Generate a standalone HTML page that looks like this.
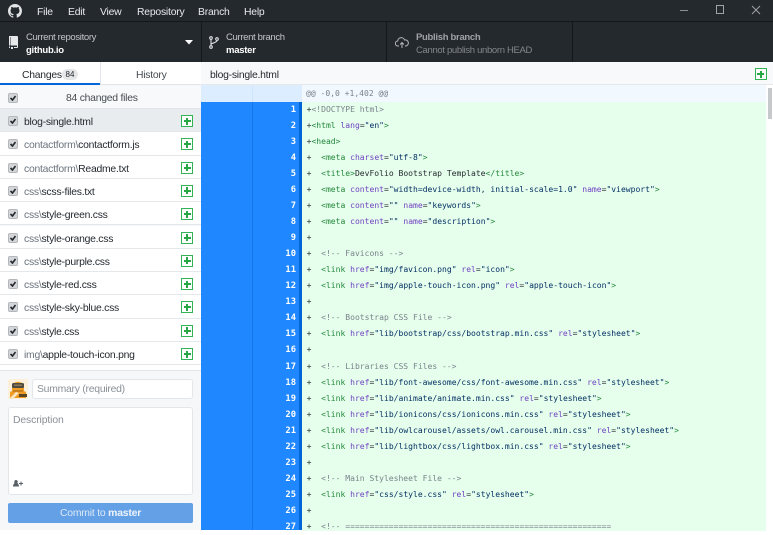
<!DOCTYPE html>
<html><head><meta charset="utf-8">
<style>
*{box-sizing:border-box}
html,body{margin:0;padding:0;width:773px;height:530px;overflow:hidden;background:#fff;font-family:"Liberation Sans",sans-serif;font-size:10.5px;color:#24292e}
.a{position:absolute;white-space:nowrap}
.menu{top:5px;color:#e8eaec;font-size:10.4px;line-height:14px;letter-spacing:-.22px;margin-top:1px}
.tb{background:#24292e;border-right:1px solid #14171a;top:22px;height:40px}
.t1{color:#c3c6c9;font-size:9.5px;line-height:12px;letter-spacing:-.33px;margin-top:2px}
.t2{color:#fff;font-size:9.5px;line-height:12px;font-weight:bold;letter-spacing:-.25px;margin-top:2px}
.ui{font-size:10.4px;line-height:13px;letter-spacing:-.25px}
.row{left:0;width:201px;height:23.3px;background:#fff;border-bottom:1px solid #e5e8eb}
.cb{position:absolute;left:8px;width:10px;height:10px;background:#d4d6d9;border:1px solid #b4b7ba;border-radius:2px}
.cb svg{position:absolute;left:0;top:0}
.plus{position:absolute;left:181px;width:12px;height:12px;border:1px solid #34b356;background:#fff}
.plus:before{content:"";position:absolute;left:4px;top:1.5px;width:2px;height:7px;background:#28a745}
.plus:after{content:"";position:absolute;left:1.5px;top:4px;width:7px;height:2px;background:#28a745}
.fn{position:absolute;left:24px;top:7px;line-height:13px;color:#24292e;font-size:10.4px;letter-spacing:-.25px}
.fn i{font-style:normal;color:#6a737d}
#code{position:absolute;left:302px;top:101.9px;width:464px;height:429px;background:#e6ffed;overflow:hidden}
.l{position:absolute;left:4.6px;height:16px;line-height:16px;font-family:"DejaVu Sans Mono",monospace;font-size:8.04px;white-space:pre;color:#24292e}
.n{position:absolute;left:252px;width:44px;text-align:right;color:#fff;font-family:"DejaVu Sans Mono",monospace;font-size:8.8px;font-weight:bold;line-height:16px;margin-top:.4px}
.g{color:#22863a}.p{color:#6f42c1}.s{color:#032f62}.c{color:#7a828a}
</style></head><body>

<!-- title bar -->
<div class="a" style="left:0;top:0;width:773px;height:22px;background:#24292e;border-bottom:1px solid #14171a"></div>
<svg class="a" style="left:8px;top:4px" width="14" height="14" viewBox="0 0 16 16"><path fill="#e2e4e6" d="M8 0C3.58 0 0 3.58 0 8c0 3.54 2.29 6.53 5.47 7.59.4.07.55-.17.55-.38v-1.34c-2.22.48-2.69-1.07-2.69-1.07-.36-.92-.89-1.17-.89-1.17-.73-.5.05-.49.05-.49.8.06 1.23.82 1.23.82.71 1.22 1.87.87 2.33.66.07-.52.28-.87.5-1.07-1.78-.2-3.64-.89-3.64-3.95 0-.87.31-1.59.82-2.15-.08-.2-.36-1.02.08-2.12 0 0 .67-.21 2.2.82a7.7 7.7 0 0 1 4 0c1.53-1.04 2.2-.82 2.2-.82.44 1.1.16 1.92.08 2.12.51.56.82 1.27.82 2.15 0 3.07-1.87 3.75-3.65 3.95.29.25.54.73.54 1.48v2.2c0 .21.15.46.55.38A8 8 0 0 0 16 8c0-4.42-3.58-8-8-8z"/></svg>
<div class="a menu" style="left:37px">File</div>
<div class="a menu" style="left:68px">Edit</div>
<div class="a menu" style="left:100px">View</div>
<div class="a menu" style="left:137px">Repository</div>
<div class="a menu" style="left:198px">Branch</div>
<div class="a menu" style="left:244px">Help</div>
<div class="a" style="left:680px;top:10px;width:8px;height:1px;background:#8b8f93"></div>
<div class="a" style="left:716px;top:5px;width:8px;height:9px;border:1px solid #a0a3a6"></div>
<svg class="a" style="left:751px;top:5px" width="10" height="10"><path d="M1 1l8 8M9 1l-8 8" stroke="#a0a3a6" fill="none"/></svg>

<!-- toolbar -->
<div class="a tb" style="left:0;width:202px"></div>
<div class="a tb" style="left:202px;width:185px"></div>
<div class="a tb" style="left:387px;width:186px"></div>
<div class="a" style="left:573px;top:22px;width:200px;height:40px;background:#24292e"></div>
<svg class="a" style="left:8px;top:36px" width="10" height="13" viewBox="0 0 10 13"><path fill="#e6e8ea" d="M1 0h8a1 1 0 0 1 1 1v10a1 1 0 0 1-1 1H6v-1h3V9.500H2.500V1H1zM1 1h1v8.500H1zM1 10.500h1V12H1zM3 11h2v2H3z"/></svg>
<div class="a t1" style="left:26px;top:30px">Current repository</div>
<div class="a t2" style="left:26px;top:43px">github.io</div>
<svg class="a" style="left:185px;top:40px" width="8" height="5"><path d="M0 0h8L4 4.500z" fill="#fff"/></svg>
<svg class="a" style="left:209px;top:36px" width="10" height="13" viewBox="0 0 10 13"><g fill="none" stroke="#dfe1e3" stroke-width="1.100"><circle cx="2" cy="2" r="1.300"/><circle cx="8" cy="3" r="1.300"/><circle cx="2" cy="11" r="1.300"/><path d="M2 3.400v6.200M8 4.400c0 2.600-6 2.400-6 4.200"/></g></svg>
<div class="a t1" style="left:226px;top:30px">Current branch</div>
<div class="a t2" style="left:226px;top:43px">master</div>
<svg class="a" style="left:395px;top:37px" width="14" height="12" viewBox="0 0 14 12"><path d="M4 9H3a2.500 2.500 0 0 1-.3-5A3.500 3.500 0 0 1 9.500 3 2.900 2.900 0 0 1 11 9h-1M7 11V6M5.200 7.500L7 5.500l1.800 2" fill="none" stroke="#b5b8bb" stroke-width="1"/></svg>
<div class="a t2" style="left:416px;top:30px;color:#9ea2a6;letter-spacing:-.3px">Publish branch</div>
<div class="a t1" style="left:416px;top:43px;color:#82878c">Cannot publish unborn HEAD</div>

<!-- tabs -->
<div class="a" style="left:0;top:62px;width:201px;height:23px;background:#fff;border-bottom:1px solid #e1e4e8"></div>
<div class="a" style="left:0;top:83px;width:100px;height:2px;background:#0366d6"></div>
<div class="a" style="left:100px;top:62px;width:1px;height:23px;background:#e1e4e8"></div>
<div class="a ui" style="left:22px;top:69px">Changes</div>
<div class="a" style="left:62px;top:69px;width:16px;height:11px;border-radius:6px;background:#e4e6e8;font-size:8px;line-height:11px;text-align:center">84</div>
<div class="a ui" style="left:136px;top:69px;color:#464c52">History</div>
<div class="a" style="left:201px;top:62px;width:572px;height:23px;background:#f8f9fb;border-bottom:1px solid #e6e9ec"></div>
<div class="a ui" style="left:210px;top:69px">blog-single.html</div>
<div class="plus" style="left:754.500px;top:68px;position:absolute"></div>

<!-- sidebar -->
<div class="a" style="left:0;top:85px;width:201px;height:445px;background:#f5f7f9"></div>
<div class="row a" style="top:86px;height:23px;background:#f8f9fa;border-bottom:1px solid #e1e4e8">
  <div class="cb" style="top:7px"><svg width="8" height="8"><path d="M1.500 4l2 2 3-4" fill="none" stroke="#24292e" stroke-width="1.600"/></svg></div>
  <div class="fn" style="left:66px;top:6px;color:#464c52">84 changed files</div>
</div>
<div class="row a" style="top:109px;background:#e9ecef"><div class="cb" style="top:7px"><svg width="8" height="8"><path d="M1.500 4l2 2 3-4" fill="none" stroke="#24292e" stroke-width="1.600"/></svg></div><div class="fn">blog-single.html</div><div class="plus" style="top:6px"></div></div>
<div class="row a" style="top:132.300px"><div class="cb" style="top:7px"><svg width="8" height="8"><path d="M1.500 4l2 2 3-4" fill="none" stroke="#24292e" stroke-width="1.600"/></svg></div><div class="fn"><i>contactform\</i>contactform.js</div><div class="plus" style="top:6px"></div></div>
<div class="row a" style="top:155.600px"><div class="cb" style="top:7px"><svg width="8" height="8"><path d="M1.500 4l2 2 3-4" fill="none" stroke="#24292e" stroke-width="1.600"/></svg></div><div class="fn"><i>contactform\</i>Readme.txt</div><div class="plus" style="top:6px"></div></div>
<div class="row a" style="top:178.900px"><div class="cb" style="top:7px"><svg width="8" height="8"><path d="M1.500 4l2 2 3-4" fill="none" stroke="#24292e" stroke-width="1.600"/></svg></div><div class="fn"><i>css\</i>scss-files.txt</div><div class="plus" style="top:6px"></div></div>
<div class="row a" style="top:202.200px"><div class="cb" style="top:7px"><svg width="8" height="8"><path d="M1.500 4l2 2 3-4" fill="none" stroke="#24292e" stroke-width="1.600"/></svg></div><div class="fn"><i>css\</i>style-green.css</div><div class="plus" style="top:6px"></div></div>
<div class="row a" style="top:225.500px"><div class="cb" style="top:7px"><svg width="8" height="8"><path d="M1.500 4l2 2 3-4" fill="none" stroke="#24292e" stroke-width="1.600"/></svg></div><div class="fn"><i>css\</i>style-orange.css</div><div class="plus" style="top:6px"></div></div>
<div class="row a" style="top:248.800px"><div class="cb" style="top:7px"><svg width="8" height="8"><path d="M1.500 4l2 2 3-4" fill="none" stroke="#24292e" stroke-width="1.600"/></svg></div><div class="fn"><i>css\</i>style-purple.css</div><div class="plus" style="top:6px"></div></div>
<div class="row a" style="top:272.100px"><div class="cb" style="top:7px"><svg width="8" height="8"><path d="M1.500 4l2 2 3-4" fill="none" stroke="#24292e" stroke-width="1.600"/></svg></div><div class="fn"><i>css\</i>style-red.css</div><div class="plus" style="top:6px"></div></div>
<div class="row a" style="top:295.400px"><div class="cb" style="top:7px"><svg width="8" height="8"><path d="M1.500 4l2 2 3-4" fill="none" stroke="#24292e" stroke-width="1.600"/></svg></div><div class="fn"><i>css\</i>style-sky-blue.css</div><div class="plus" style="top:6px"></div></div>
<div class="row a" style="top:318.700px"><div class="cb" style="top:7px"><svg width="8" height="8"><path d="M1.500 4l2 2 3-4" fill="none" stroke="#24292e" stroke-width="1.600"/></svg></div><div class="fn"><i>css\</i>style.css</div><div class="plus" style="top:6px"></div></div>
<div class="row a" style="top:342px;height:23px"><div class="cb" style="top:7px"><svg width="8" height="8"><path d="M1.500 4l2 2 3-4" fill="none" stroke="#24292e" stroke-width="1.600"/></svg></div><div class="fn"><i>img\</i>apple-touch-icon.png</div><div class="plus" style="top:6px"></div></div>
<div class="a" style="left:0;top:365px;width:201px;height:6px;background:#fff;border-bottom:1px solid #e1e4e8"></div>

<!-- commit form -->
<svg class="a" style="left:8px;top:379px;border-radius:2px" width="20" height="20" viewBox="0 0 20 20"><rect width="20" height="20" fill="#fdf0da"/><path d="M4 8c0-7 12-7 12 0v4l2 1v6H2v-6l2-1z" fill="#ee9c24"/><rect x="4" y="4" width="12" height="5" rx="1.500" fill="#4d4a44"/><rect x="6" y="5.500" width="8" height="1.500" fill="#8d7a55"/><rect x="5" y="11" width="10" height="2" fill="#c97f1c"/><path d="M1 20l7-7 3 1-6 6z" fill="#fbe6c4"/><rect x="11" y="15" width="8" height="3" fill="#5a4524"/></svg>
<div class="a" style="left:32px;top:379px;width:161px;height:20px;background:#fff;border:1px solid #e4e7ea;border-radius:3px;padding-left:4px;font-size:10.4px;letter-spacing:-.25px;line-height:20px;color:#8a9097">Summary (required)</div>
<div class="a" style="left:8px;top:407px;width:185px;height:88px;background:#fff;border:1px solid #e4e7ea;border-radius:3px;padding:6px 4px;font-size:10.4px;letter-spacing:-.12px;line-height:13px;color:#8a9097">Description</div>
<svg class="a" style="left:13px;top:480px" width="10" height="8" viewBox="0 0 10 8"><path fill="#5a6068" d="M3 0a1.700 1.700 0 0 1 1.500 2.600C4.300 3.500 6 4 6 6.500H0C0 4 1.700 3.500 1.500 2.600A1.700 1.700 0 0 1 3 0zM7.500 1.500h1v1.500H10v1H8.500v1.500h-1V4H6V3h1.500z"/></svg>
<div class="a" style="left:8px;top:503px;width:185px;height:20px;background:#64a0e6;border-radius:2px;color:#dce9f8;text-align:center;font-size:10.4px;letter-spacing:-.2px;line-height:21px">Commit to <b style="color:#edf4fc">master</b></div>

<!-- diff -->
<div class="a" style="left:201px;top:85px;width:572px;height:445px;background:#fff"></div>
<div class="a" style="left:201px;top:85px;width:51px;height:17px;background:#dbedff"></div>
<div class="a" style="left:252px;top:85px;width:50px;height:17px;background:#dbedff;border-left:1px solid #cfe5fb"></div>
<div class="a" style="left:302px;top:85px;width:464px;height:17px;background:#f1f8ff"></div>
<div class="a" style="left:306px;top:85px;height:17px;line-height:18px;font-family:'DejaVu Sans Mono',monospace;font-size:8.04px;color:#7a828a">@@ -0,0 +1,402 @@</div>
<div class="a" style="left:201px;top:102px;width:51px;height:428px;background:#1f87ff"></div>
<div class="a" style="left:252px;top:102px;width:47px;height:428px;background:#1f87ff;border-left:1px solid #1a74e0"></div>
<div class="a" style="left:299px;top:102px;width:3px;height:428px;background:#0366d6"></div>
<div class="a" style="left:768px;top:88px;width:4px;height:31px;background:#c6c8ca"></div>
<div id="code">
<div class="l" style="top:0px">+<span class="c">&lt;!DOCTYPE html&gt;</span></div>
<div class="l" style="top:16.040px">+<span class="g">&lt;html</span> <span class="p">lang</span>=<span class="s">"en"</span><span class="g">&gt;</span></div>
<div class="l" style="top:32.080px">+<span class="g">&lt;head&gt;</span></div>
<div class="l" style="top:48.120px">+  <span class="g">&lt;meta</span> <span class="p">charset</span>=<span class="s">"utf-8"</span><span class="g">&gt;</span></div>
<div class="l" style="top:64.160px">+  <span class="g">&lt;title&gt;</span>DevFolio Bootstrap Template<span class="g">&lt;/title&gt;</span></div>
<div class="l" style="top:80.200px">+  <span class="g">&lt;meta</span> <span class="p">content</span>=<span class="s">"width=device-width, initial-scale=1.0"</span> <span class="p">name</span>=<span class="s">"viewport"</span><span class="g">&gt;</span></div>
<div class="l" style="top:96.240px">+  <span class="g">&lt;meta</span> <span class="p">content</span>=<span class="s">""</span> <span class="p">name</span>=<span class="s">"keywords"</span><span class="g">&gt;</span></div>
<div class="l" style="top:112.280px">+  <span class="g">&lt;meta</span> <span class="p">content</span>=<span class="s">""</span> <span class="p">name</span>=<span class="s">"description"</span><span class="g">&gt;</span></div>
<div class="l" style="top:128.320px">+</div>
<div class="l" style="top:144.360px">+  <span class="c">&lt;!-- Favicons --&gt;</span></div>
<div class="l" style="top:160.400px">+  <span class="g">&lt;link</span> <span class="p">href</span>=<span class="s">"img/favicon.png"</span> <span class="p">rel</span>=<span class="s">"icon"</span><span class="g">&gt;</span></div>
<div class="l" style="top:176.440px">+  <span class="g">&lt;link</span> <span class="p">href</span>=<span class="s">"img/apple-touch-icon.png"</span> <span class="p">rel</span>=<span class="s">"apple-touch-icon"</span><span class="g">&gt;</span></div>
<div class="l" style="top:192.480px">+</div>
<div class="l" style="top:208.520px">+  <span class="c">&lt;!-- Bootstrap CSS File --&gt;</span></div>
<div class="l" style="top:224.560px">+  <span class="g">&lt;link</span> <span class="p">href</span>=<span class="s">"lib/bootstrap/css/bootstrap.min.css"</span> <span class="p">rel</span>=<span class="s">"stylesheet"</span><span class="g">&gt;</span></div>
<div class="l" style="top:240.600px">+</div>
<div class="l" style="top:256.640px">+  <span class="c">&lt;!-- Libraries CSS Files --&gt;</span></div>
<div class="l" style="top:272.680px">+  <span class="g">&lt;link</span> <span class="p">href</span>=<span class="s">"lib/font-awesome/css/font-awesome.min.css"</span> <span class="p">rel</span>=<span class="s">"stylesheet"</span><span class="g">&gt;</span></div>
<div class="l" style="top:288.720px">+  <span class="g">&lt;link</span> <span class="p">href</span>=<span class="s">"lib/animate/animate.min.css"</span> <span class="p">rel</span>=<span class="s">"stylesheet"</span><span class="g">&gt;</span></div>
<div class="l" style="top:304.760px">+  <span class="g">&lt;link</span> <span class="p">href</span>=<span class="s">"lib/ionicons/css/ionicons.min.css"</span> <span class="p">rel</span>=<span class="s">"stylesheet"</span><span class="g">&gt;</span></div>
<div class="l" style="top:320.800px">+  <span class="g">&lt;link</span> <span class="p">href</span>=<span class="s">"lib/owlcarousel/assets/owl.carousel.min.css"</span> <span class="p">rel</span>=<span class="s">"stylesheet"</span><span class="g">&gt;</span></div>
<div class="l" style="top:336.840px">+  <span class="g">&lt;link</span> <span class="p">href</span>=<span class="s">"lib/lightbox/css/lightbox.min.css"</span> <span class="p">rel</span>=<span class="s">"stylesheet"</span><span class="g">&gt;</span></div>
<div class="l" style="top:352.880px">+</div>
<div class="l" style="top:368.920px">+  <span class="c">&lt;!-- Main Stylesheet File --&gt;</span></div>
<div class="l" style="top:384.960px">+  <span class="g">&lt;link</span> <span class="p">href</span>=<span class="s">"css/style.css"</span> <span class="p">rel</span>=<span class="s">"stylesheet"</span><span class="g">&gt;</span></div>
<div class="l" style="top:401px">+</div>
<div class="l" style="top:417.040px">+  <span class="c">&lt;!-- =======================================================</span></div>
</div>
<div class="n" style="top:101.500px">1</div>
<div class="n" style="top:117.540px">2</div>
<div class="n" style="top:133.580px">3</div>
<div class="n" style="top:149.620px">4</div>
<div class="n" style="top:165.660px">5</div>
<div class="n" style="top:181.700px">6</div>
<div class="n" style="top:197.740px">7</div>
<div class="n" style="top:213.780px">8</div>
<div class="n" style="top:229.820px">9</div>
<div class="n" style="top:245.860px">10</div>
<div class="n" style="top:261.900px">11</div>
<div class="n" style="top:277.940px">12</div>
<div class="n" style="top:293.980px">13</div>
<div class="n" style="top:310.020px">14</div>
<div class="n" style="top:326.060px">15</div>
<div class="n" style="top:342.100px">16</div>
<div class="n" style="top:358.140px">17</div>
<div class="n" style="top:374.180px">18</div>
<div class="n" style="top:390.220px">19</div>
<div class="n" style="top:406.260px">20</div>
<div class="n" style="top:422.300px">21</div>
<div class="n" style="top:438.340px">22</div>
<div class="n" style="top:454.380px">23</div>
<div class="n" style="top:470.420px">24</div>
<div class="n" style="top:486.460px">25</div>
<div class="n" style="top:502.500px">26</div>
<div class="n" style="top:518.540px">27</div>
</body></html>
